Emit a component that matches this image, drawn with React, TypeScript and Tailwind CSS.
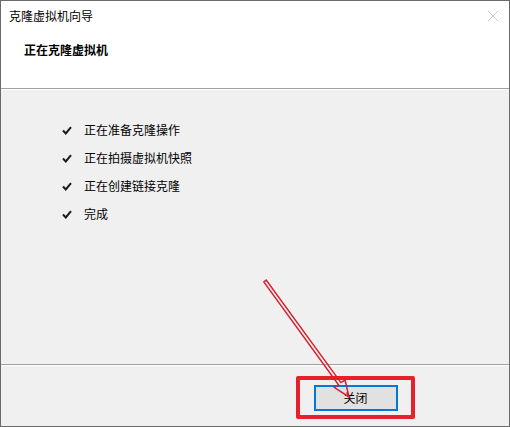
import React from "react";

const font = { fontFamily: '"Noto Sans CJK SC", "Noto Sans", sans-serif' };

function Check() {
  return (
    <svg width="10" height="9" viewBox="0 0 10 9" className="shrink-0">
      <path d="M1 4.5 L3.8 7.5 L9 1.2" fill="none" stroke="#1a1a1a" strokeWidth="2" />
    </svg>
  );
}

export default function App() {
  const items = ["正在准备克隆操作", "正在拍摄虚拟机快照", "正在创建链接克隆", "完成"];
  return (
    <div className="relative w-[510px] h-[427px] border border-[#6a6a6a] bg-[#f0f0f0] flex flex-col text-[12px] text-[#000]" style={font}>
      <div className="bg-white h-[88px] border-b border-[#a0a0a0] flex flex-col">
        <div className="h-[30px] flex items-center justify-between pl-[8px] pr-[10px]">
          <span className="text-[12px]">克隆虚拟机向导</span>
          <svg width="12" height="12" viewBox="0 0 12 12">
            <path d="M1 1 L11 11 M11 1 L1 11" stroke="#c8c8c8" strokeWidth="1" />
          </svg>
        </div>
        <div className="pl-[23px] pt-[11px] font-bold text-[12px] leading-[16px]">正在克隆虚拟机</div>
      </div>
      <div className="flex-1 border-t border-white border-b border-b-[#a0a0a0] pt-[26px] pl-[61px] flex flex-col">
        {items.map((t) => (
          <div key={t} className="h-[28px] flex items-center gap-[12px]">
            <Check />
            <span>{t}</span>
          </div>
        ))}
      </div>
      <div className="h-[61px] border-t border-white flex justify-end pr-[94px] pt-[10px]">
        <div className="w-[119px] h-[43px] border-4 border-[#e8202a] rounded-[2px] flex items-center justify-center">
          <button className="w-[84px] h-[26px] bg-[#e1e1e1] border-2 border-[#0078d7] flex items-center justify-center text-[12px]" style={font}>
            关闭
          </button>
        </div>
      </div>
      <svg className="absolute left-0 top-0 pointer-events-none" width="510" height="427" viewBox="0 0 510 427">
        <polygon
          points="262.8,280.9 337.5,383.9 333.5,386.6 348,396 344.1,379 339.9,381.6 265.2,279.1"
          fill="none"
          stroke="#d8202c"
          strokeWidth="1.5"
          strokeLinejoin="miter"
        />
      </svg>
    </div>
  );
}
